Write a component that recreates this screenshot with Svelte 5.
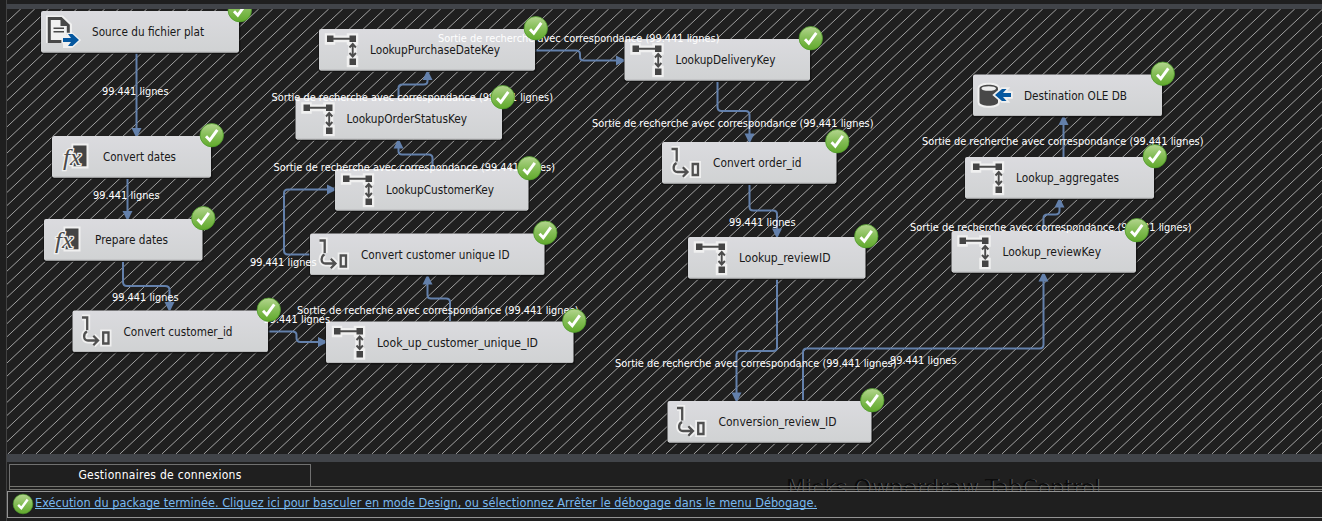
<script>
  const nodes = [
    { x: 41, y: 11, w: 198, t: 'Source du fichier plat', tw: 112, icon: 'file' },
    { x: 52, y: 136, w: 159, t: 'Convert dates', tw: 73, icon: 'fx' },
    { x: 44, y: 219, w: 158.5, t: 'Prepare dates', tw: 73, icon: 'fx' },
    { x: 72.5, y: 310.5, w: 195.5, t: 'Convert customer_id', tw: 109, icon: 'conv' },
    { x: 326, y: 321.5, w: 247.5, t: 'Look_up_customer_unique_ID', tw: 161, icon: 'look' },
    { x: 310, y: 233.5, w: 234.5, t: 'Convert customer unique ID', tw: 148.5, icon: 'conv' },
    { x: 335, y: 169, w: 193.5, t: 'LookupCustomerKey', tw: 108, icon: 'look' },
    { x: 295.5, y: 98, w: 206.5, t: 'LookupOrderStatusKey', tw: 120.5, icon: 'look' },
    { x: 319, y: 29, w: 216, t: 'LookupPurchaseDateKey', tw: 130, icon: 'look' },
    { x: 624.5, y: 39, w: 185.5, t: 'LookupDeliveryKey', tw: 100, icon: 'look' },
    { x: 662, y: 142, w: 174.5, t: 'Convert order_id', tw: 88.5, icon: 'conv' },
    { x: 688, y: 237, w: 177.5, t: 'Lookup_reviewID', tw: 91.5, icon: 'look' },
    { x: 667.5, y: 401, w: 204, t: 'Conversion_review_ID', tw: 118, icon: 'conv' },
    { x: 951.5, y: 231, w: 184.5, t: 'Lookup_reviewKey', tw: 98.5, icon: 'look' },
    { x: 965, y: 157, w: 189, t: 'Lookup_aggregates', tw: 103, icon: 'look' },
    { x: 973, y: 74.5, w: 189, t: 'Destination OLE DB', tw: 103, icon: 'db' }
  ];
  // path, arrow tip x, arrow tip y, arrow rotation (0 = down)
  const wires = [
    ['M136.5 53V130', 136.5, 136.5, 0],
    ['M127.5 179V213', 127.5, 219.5, 0],
    ['M123 262V282Q123 286 127 286H165Q169.500 286 169.500 290V304', 169.5, 310.5, 0],
    ['M268 331.500H292.500Q296.500 331.500 296.500 335V338Q296.500 342 300.500 342H320', 326.5, 342, -90],
    ['M450 321V302Q450 298.500 446 298.500H431Q427.500 298.500 427.500 295V282', 427.5, 276, 180],
    ['M310 254.500H288Q284 254.500 284 250.500V193Q284 189.500 288 189.500H329', 335.5, 189.5, -90],
    ['M432.500 169V158Q432.500 154.500 428.500 154.500H402Q398.500 154.500 398.500 151V146', 398.5, 140, 180],
    ['M398.500 98V88Q398.500 84.500 402.500 84.500H423.500Q427.500 84.500 427.500 81V77', 427.5, 71.5, 180],
    ['M535 50.500H576Q580 50.500 580 54V57Q580 60.500 584 60.500H618', 624.5, 60.5, -90],
    ['M717.500 82V107Q717.500 111 721.500 111H745.500Q749.500 111 749.500 115V135', 749.5, 142, 0],
    ['M749.500 185V207Q749.500 210.500 753.500 210.500H773Q777 210.500 777 214V230', 777, 237, 0],
    ['M777 279V347.500Q777 351 773 351H740.500Q736.500 351 736.500 355V394', 736.5, 401, 0],
    ['M803 400V352.500Q803 348.500 807 348.500H1039.500Q1043.500 348.500 1043.500 344.500V280', 1043.5, 273, 180],
    ['M1043.500 231V218Q1043.500 214.500 1047.500 214.500H1055.500Q1059.500 214.500 1059.500 210.500V205', 1059.5, 199, 180],
    ['M1063.500 157V123', 1063.5, 116.5, 180]
  ];
  const long = 'Sortie de recherche avec correspondance (99.441 lignes)';
  const short = '99.441 lignes';
  const labels = [
    [102, 95, 0], [93, 199, 0], [112, 301, 0], [263.5, 323, 0], [250, 266, 0], [729, 226, 0], [890, 364, 0],
    [438, 42, 1], [271.5, 100.5, 1], [273.5, 170.5, 1], [297, 314, 1], [592, 127, 1], [615, 367, 1], [922, 145, 1], [910, 231, 1]
  ];
  const hatch = Array.from({ length: 130 }, (_, k) => {
    const x = 20.7 + 14 * k;
    return `M${x} 9L${x - 445 * 14 / 13.12} 454`;
  }).join('');
</script>

{#snippet check(x, y, s)}
  <g transform="translate({x} {y}) scale({s})">
    <circle r="11.7" fill="url(#green)" stroke="#4e9a2b" stroke-width="0.8" />
    <path d="M-5.800 1L-2 5L5.500 -5.300" fill="none" stroke="#fff" stroke-width="2.900" />
  </g>
{/snippet}

{#snippet lookup()}
  <path d="M8 6.500h6v2.200h16v-2.200h7v7h-1.500v15.500h1.500v7h-7v-7h1.500v-15.500h-1.500v-2.500h-16v2.500h-6z" />
{/snippet}

<div class="app">
  <div class="topbar"></div>
  <main>
    <svg class="canvas" width="1315" height="445" viewBox="7 9 1315 445">
      <defs>
        <linearGradient id="green" x1="0" y1="0" x2="0" y2="1">
          <stop offset="0" stop-color="#b4d58f" /><stop offset="0.500" stop-color="#84bd56" /><stop offset="1" stop-color="#61a92c" />
        </linearGradient>
        <linearGradient id="box" x1="0" y1="0" x2="0" y2="1">
          <stop offset="0" stop-color="#dbdbdf" /><stop offset="1" stop-color="#d0d2d3" />
        </linearGradient>
      </defs>
      <path d={hatch} stroke="#a2a2a2" stroke-width="1" />
      {#each wires as [d, x, y, r]}
        <path {d} fill="none" stroke="#6380ab" stroke-width="2" />
        <path d="M-5 -8.500H5L0.800 0H-0.800Z" fill="#6380ab" transform="translate({x} {y}) rotate({r})" />
      {/each}
      {#each nodes as n}
        <g transform="translate({n.x} {n.y})">
          <rect x="-0.800" y="0" width={n.w + 2.3} height="43" rx="2" fill="#111" opacity="0.800" />
          <rect width={n.w} height="41.500" rx="2" fill="url(#box)" />
          <path d="M1.500 41H{n.w - 1.5}" stroke="#b8b9ba" stroke-width="1" />
          {#if n.icon === 'look'}
            <g stroke="#f0f0f0" stroke-width="4.500" fill="#f0f0f0">{@render lookup()}</g>
            <path d="M8 6.500h6.500v6.500h-6.500zM30.500 6.500h6.500v6.500h-6.500zM30.500 29.500h6.500v6.500h-6.500z" fill="#444" />
            <path d="M14 9.700H31M33.700 15V27M30.500 18.500L33.700 15L36.900 18.500M30.500 24L33.700 27.500L36.900 24" fill="none" stroke="#4b4b4b" stroke-width="1.900" />
          {:else if n.icon === 'conv'}
            {#each [['#f0f0f0', 6], ['#505050', 2.3]] as [c, sw]}
              <path d="M9.500 7H14.700V19.500M14.500 21C10.500 23 10.500 30 15.500 30H25M20.800 25.300L25.500 30L20.800 34.700M30.700 22h5.300v11h-5.300z" fill="none" stroke={c} stroke-width={sw} />
            {/each}
          {:else if n.icon === 'fx'}
            <path d="M19.500 7.500H36.500V32.500H19.500Z" fill="#f0f0f0" />
            <path d="M21.300 9.500H34.500V30.300H21.300Z" fill="#444" />
            <text class="fx" x="11" y="28.500" textLength="18" lengthAdjust="spacingAndGlyphs">fx</text>
          {:else if n.icon === 'file'}
            <path d="M5 4.500H22L31 13V23L40 29L31 37H22V32H5Z" fill="#f0f0f0" />
            <path d="M20.500 30.500H8.300V7.500H20L27.300 14.500V23.500" fill="none" stroke="#484848" stroke-width="3" />
            <path d="M19.500 7V15H28Z" fill="#484848" />
            <path d="M12.500 17.300H23M12.500 20.700H23" stroke="#484848" stroke-width="1.500" />
            <path d="M22 27H30L27 23H31.500L38 29L31.500 35H27L30 31H22Z" fill="#05579f" stroke="#f0f0f0" stroke-width="2.500" paint-order="stroke" />
          {:else}
            <path d="M6.500 14C6.500 9 25 9 25 14V27.500C25 32.500 6.500 32.500 6.500 27.500Z" fill="#484848" stroke="#f0f0f0" stroke-width="4" paint-order="stroke" />
            <ellipse cx="15.700" cy="14" rx="7.300" ry="2.300" fill="#ededed" />
            <path d="M38 18.500H30L33.500 14.500H29L22 20.500L29 26.500H33.500L30 22.500H38Z" fill="#05579f" stroke="#f0f0f0" stroke-width="3.500" paint-order="stroke" />
          {/if}
          <text class="name" x="51" y="25" textLength={n.tw} lengthAdjust="spacingAndGlyphs">{n.t}</text>
        </g>
      {/each}
      {#each labels as [x, y, big]}
        <text class="label" {x} {y} textLength={big ? 281.5 : 66.5} lengthAdjust="spacingAndGlyphs">{big ? long : short}</text>
      {/each}
      {#each nodes as n}
        {@render check(n.x + n.w + 0.8, n.y - 0.8, 1)}
      {/each}
    </svg>
    <div class="splitter"></div>
    <footer>
      <div class="tabs">
        <div class="tab"><span>Gestionnaires de connexions</span></div>
        <svg class="ghost" width="330" height="17" viewBox="780 474 330 17">
          <text x="787" y="495" textLength="314" lengthAdjust="spacingAndGlyphs" fill="#77777a" opacity="0.700">Micks Ownerdraw TabControl</text>
          <text x="786" y="494.500" textLength="314" lengthAdjust="spacingAndGlyphs" fill="#0c0c0c">Micks Ownerdraw TabControl</text>
        </svg>
      </div>
      <div class="panel"></div>
      <div class="status">
        <svg width="22" height="22" viewBox="-11 -11 22 22">{@render check(0, 0, 0.84)}</svg>
        <svg class="linkbox" width="784" height="22" viewBox="35 494 784 22">
          <text class="link" x="35" y="508" textLength="782" lengthAdjust="spacingAndGlyphs">Exécution du package terminée. Cliquez ici pour basculer en mode Design, ou sélectionnez Arrêter le débogage dans le menu Débogage.</text>
          <path d="M35 509.500H817" stroke="#79b9f0" />
        </svg>
      </div>
    </footer>
  </main>
</div>

<style>
  :global(body) { background: #1f1f1f; overflow: hidden; }
  .app { width: 1322px; height: 521px; display: flex; flex-direction: column; background: #1f1f1f; overflow: hidden; }
  .topbar { height: 4px; flex: none; margin-left: 6px; border-left: 1px solid #424242; }
  main { flex: 1; margin-left: 6px; border-left: 1px solid #424242; border-top: 5px solid #414449; display: flex; flex-direction: column; }
  .canvas { display: block; flex: none; }
  .name { font: 12px "DejaVu Sans Condensed", "DejaVu Sans", sans-serif; font-stretch: condensed; fill: #181818; }
  .label { font: 10px "DejaVu Sans", sans-serif; fill: #fff; }
  .fx { font: italic 23px "Liberation Serif", serif; fill: #4a4a4a; stroke: #f0f0f0; stroke-width: 2.5px; paint-order: stroke; }
  .splitter { height: 8px; background: #414449; flex: none; }
  footer { display: flex; flex-direction: column; flex: none; }
  .tabs { height: 24px; padding: 2px 0 0 2px; box-sizing: border-box; display: flex; align-items: flex-start; }
  .tab { box-sizing: border-box; width: 302px; height: 23px; padding-bottom: 2px; border: 1px solid #707070; flex: none; display: flex; align-items: center; justify-content: center; color: #fff; font: 12px "DejaVu Sans Condensed", "DejaVu Sans", sans-serif; font-stretch: condensed; letter-spacing: 0.28px; }
  .ghost { margin: 10px 0 0 469px; flex: none; overflow: hidden; height: 17px; }
  .ghost text { font: 22px "DejaVu Sans Condensed", "DejaVu Sans", sans-serif; font-stretch: condensed; }
  .panel { height: 4px; box-sizing: border-box; margin-left: 2px; border: 1px solid #74746f; border-right: 0; flex: none; position: relative; }
  .status { margin-top: 1px; height: 27px; box-sizing: border-box; border: 1px solid #949494; border-right: 0; padding: 0 0 2px 4px; display: flex; align-items: center; gap: 1px; background: #1f1f1f; position: relative; }
  .link { font: 12px "DejaVu Sans Condensed", "DejaVu Sans", sans-serif; font-stretch: condensed; fill: #79b9f0; }
</style>
